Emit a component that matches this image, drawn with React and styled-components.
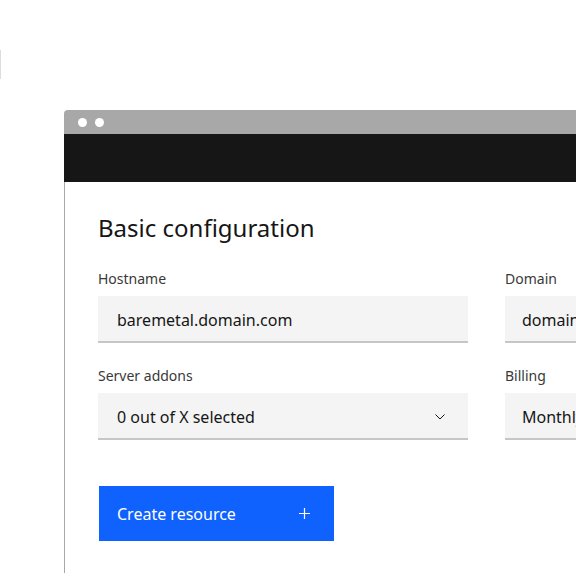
import React from 'react';
import styled, {createGlobalStyle} from 'styled-components';

const Global = createGlobalStyle`
    html, body {
        margin: 0;
        padding: 0;
        background: #ffffff;
        overflow: hidden;
    }
    body {
        width: 576px;
        height: 576px;
        font-family: "Noto Sans", "Open Sans", sans-serif;
        color: #161616;
    }
`;

const Page = styled.div`
    width: 576px;
    height: 576px;
    overflow: hidden;
`;

const Stub = styled.div`
    width: 1px;
    height: 29px;
    margin-top: 50px;
    background: #dcdcdc;
`;

const Window = styled.div`
    width: 640px;
    margin: 31px 0 0 64px;
    display: flex;
    flex-direction: column;
`;

const Chrome = styled.div`
    height: 24px;
    background: #a8a8a8;
    border-top-left-radius: 4px;
    display: flex;
    align-items: center;
    gap: 8px;
    padding-left: 14px;
`;

const Dot = styled.span`
    width: 9px;
    height: 9px;
    border-radius: 50%;
    background: #ffffff;
`;

const Header = styled.div`
    height: 48px;
    background: #161616;
`;

const Body = styled.div`
    height: 361px;
    border-left: 1px solid #a8a8a8;
    padding: 30px 0 0 33px;
`;

const Title = styled.h2`
    margin: 0 0 27px;
    font-size: 24px;
    line-height: 32px;
    font-weight: 400;
    color: #161616;
`;

const Grid = styled.div`
    display: grid;
    grid-template-columns: 370px 1fr;
    column-gap: 37px;
    row-gap: 25px;
`;

const Field = styled.div`
    display: flex;
    flex-direction: column;
    gap: 9px;
`;

const Label = styled.label`
    font-size: 14px;
    line-height: 16px;
    color: #393939;
`;

const Control = styled.div`
    height: 45px;
    box-sizing: content-box;
    background: #f4f4f4;
    border-bottom: 2px solid #c6c6c6;
    display: flex;
    align-items: center;
    justify-content: space-between;
    padding: 3px 23px 0 ${p => p.$inset}px;
    height: 42px;
    font-size: 16px;
    color: #161616;
    white-space: nowrap;
`;

const Button = styled.button`
    margin-top: 46px;
    margin-left: 1px;
    width: 235px;
    height: 55px;
    border: 0;
    border-radius: 0;
    background: #0f62fe;
    color: #ffffff;
    font-family: inherit;
    font-size: 16px;
    display: flex;
    align-items: center;
    justify-content: space-between;
    padding: 0 24px 0 18px;
`;

const Chevron = () => (
    <svg width="10" height="6" viewBox="0 0 10 6" fill="none">
        <path d="M0.5 0.5 L5 5 L9.5 0.5" stroke="#161616" strokeWidth="1" />
    </svg>
);

const Plus = () => (
    <svg width="11" height="11" viewBox="0 0 11 11" fill="none">
        <path d="M5.5 0 V11 M0 5.5 H11" stroke="#ffffff" strokeWidth="1.2" />
    </svg>
);

const fields = [
    {label: 'Hostname', value: 'baremetal.domain.com', inset: 19},
    {label: 'Domain', value: 'domain.com', inset: 17},
    {label: 'Server addons', value: '0 out of X selected', select: true, inset: 19},
    {label: 'Billing', value: 'Monthly', select: true, inset: 17},
];

export default function App() {
    return (
        <Page>
            <Global />
            <Stub />
            <Window>
                <Chrome>
                    <Dot />
                    <Dot />
                </Chrome>
                <Header />
                <Body>
                    <Title>Basic configuration</Title>
                    <Grid>
                        {fields.map(f => (
                            <Field key={f.label}>
                                <Label>{f.label}</Label>
                                <Control $inset={f.inset}>
                                    <span>{f.value}</span>
                                    {f.select && <Chevron />}
                                </Control>
                            </Field>
                        ))}
                    </Grid>
                    <Button>
                        <span>Create resource</span>
                        <Plus />
                    </Button>
                </Body>
            </Window>
        </Page>
    );
}
